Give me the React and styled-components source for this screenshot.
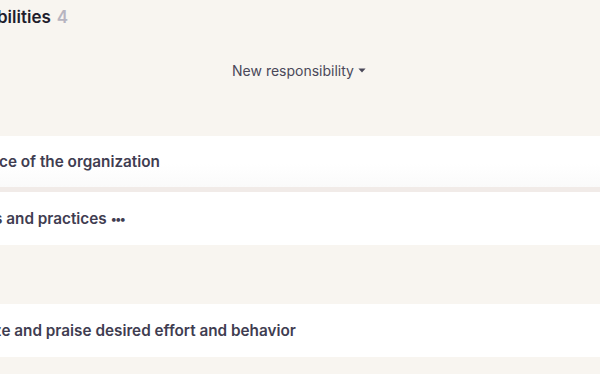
import React from 'react'
import styled, { createGlobalStyle } from 'styled-components'

const GlobalStyle = createGlobalStyle`
  html, body {
    margin: 0;
    padding: 0;
    background: #f8f5f0;
  }
  body {
    font-family: Inter, "Noto Sans", "Liberation Sans", sans-serif;
    overflow: hidden;
  }
`;

const responsibilities = [
  { id: 1, text: 'ce of the organization', shift: -1, raised: true },
  { id: 2, text: 's and practices', shift: -6, more: true },
  { id: 3, text: 'ze and praise desired effort and behavior', shift: -7, spaced: true },
];

const App = () => {
  return (
    <Page>
      <GlobalStyle />
      <Header>
        <Title $shift={-3}>bilities</Title>
        <Count>4</Count>
      </Header>
      <Toolbar>
        <NewButton type="button">
          New responsibility
          <Caret viewBox="0 0 10 6" aria-hidden="true">
            <path d="M0.5 0.5h9L5 5.5z" />
          </Caret>
        </NewButton>
      </Toolbar>
      <List>
        {responsibilities.map(item => (
          <Card key={item.id} $raised={item.raised} $spaced={item.spaced}>
            <CardText $shift={item.shift}>
              {item.text}
              {item.more && <More>•••</More>}
            </CardText>
          </Card>
        ))}
      </List>
    </Page>
  )
}

const Page = styled.div`
  width: 600px;
  height: 374px;
  overflow: hidden;
  display: flex;
  flex-direction: column;
`;

const Header = styled.div`
  height: 34px;
  display: flex;
  align-items: center;
  gap: 6px;
  font-size: 17px;
  font-weight: 600;
`;

const Title = styled.span`
  margin-left: ${props => props.$shift}px;
  color: #1f1d2c;
`;

const Count = styled.span`
  color: #b7b4c0;
`;

const Toolbar = styled.div`
  height: 72px;
  display: flex;
  align-items: center;
  justify-content: center;
  padding-right: 2px;
`;

const NewButton = styled.button`
  display: flex;
  align-items: center;
  gap: 4px;
  border: none;
  background: transparent;
  padding: 0;
  font-family: inherit;
  font-size: 14px;
  color: #4a4859;
  cursor: pointer;
`;

const Caret = styled.svg`
  width: 8px;
  height: 5px;
  fill: #4a4859;
`;

const List = styled.div`
  margin-top: 30px;
  display: flex;
  flex-direction: column;
`;

const Card = styled.div`
  height: ${props => props.$raised ? '51px' : '53px'};
  margin-top: ${props => props.$spaced ? '59px' : '0'};
  display: flex;
  align-items: center;
  background: ${props => props.$raised ? 'linear-gradient(#ffffff 55%, #fafafa)' : '#ffffff'};
  border-bottom: ${props => props.$raised ? '5px solid #f1ebe8' : 'none'};
`;

const CardText = styled.span`
  margin-left: ${props => props.$shift}px;
  font-size: 15.3px;
  font-weight: 600;
  color: #3f3d51;
  white-space: nowrap;
`;

const More = styled.span`
  margin-left: 4px;
  font-size: 12px;
  letter-spacing: -1.5px;
  vertical-align: 1px;
`;

export default App
